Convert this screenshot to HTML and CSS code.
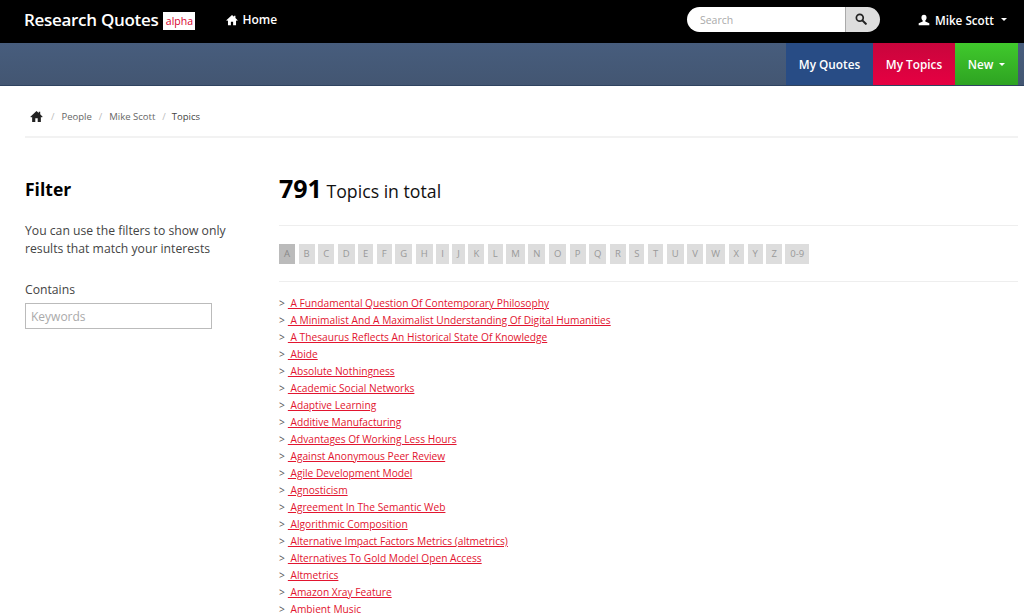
FILE: index.html
```html
<!DOCTYPE html>
<html lang="en">
<head>
    <meta charset="UTF-8">
    <title>Research Quotes - Topics</title>
    <link rel="stylesheet" href="styles.css">
</head>
<body>
    <div class="topbar">
        <a class="brand">Research Quotes</a>
        <span class="alpha">alpha</span>
        <a class="home-link">
            <svg class="icon" viewBox="0 0 14 14" width="12" height="12"><path d="M7 1.2 0.4 7.2l.8.9L2.300 7.200V13h3.400V9h2.600v4h3.400V7.200l1.100.9.800-.9L11 4.600V2H9.400v1.200z"/></svg>
            Home
        </a>
        <div class="search">
            <input class="search-input" type="text" placeholder="Search">
            <button class="search-btn">
                <svg viewBox="0 0 14 14" width="12" height="12"><circle cx="5.6" cy="5.6" r="4" fill="none" stroke="#222" stroke-width="2"/><path d="M8.6 8.6l4 4" stroke="#222" stroke-width="2.4" stroke-linecap="round"/></svg>
            </button>
        </div>
        <a class="user-link">
            <svg class="icon" viewBox="0 0 14 14" width="12" height="12"><path d="M7 .8c-2 0-3 1.500-3 3.400 0 1.500.6 2.800 1.500 3.500v1L.8 10.800V13h12.400v-2.200L8.500 8.700v-1c.9-.7 1.500-2 1.500-3.500C10 2.300 9 .8 7 .8z"/></svg>
            Mike Scott
            <span class="caret"></span>
        </a>
    </div>

    <div class="subbar">
        <a class="sub-btn quotes">My Quotes</a>
        <a class="sub-btn topics">My Topics</a>
        <a class="sub-btn new">New <span class="caret"></span></a>
    </div>

    <div class="breadcrumb">
        <svg class="crumb-home" viewBox="0 0 14 14" width="13" height="13"><path d="M7 1.200 0.400 7.200l.8.900L2.300 7.200V13h3.400V9h2.600v4h3.400V7.200l1.100.9.800-.9L11 4.600V2H9.400v1.200z"/></svg>
        <span class="sep">/</span>
        <a>People</a>
        <span class="sep">/</span>
        <a>Mike Scott</a>
        <span class="sep">/</span>
        <span class="current">Topics</span>
    </div>

    <div class="main">
        <div class="sidebar">
            <h3>Filter</h3>
            <p>You can use the filters to show only results that match your interests</p>
            <label>Contains</label>
            <input class="keywords" type="text" placeholder="Keywords">
        </div>

        <div class="content">
            <h2 class="total"><strong>791</strong> Topics in total</h2>

            <div class="letters">
                <a class="active">A</a><a>B</a><a>C</a><a>D</a><a>E</a><a>F</a><a>G</a><a>H</a><a>I</a><a>J</a><a>K</a><a>L</a><a>M</a><a>N</a><a>O</a><a>P</a><a>Q</a><a>R</a><a>S</a><a>T</a><a>U</a><a>V</a><a>W</a><a>X</a><a>Y</a><a>Z</a><a>0-9</a>
            </div>

            <ul class="topic-list">
                <li><a>&nbsp;A Fundamental Question Of Contemporary Philosophy</a></li>
                <li><a>&nbsp;A Minimalist And A Maximalist Understanding Of Digital Humanities</a></li>
                <li><a>&nbsp;A Thesaurus Reflects An Historical State Of Knowledge</a></li>
                <li><a>&nbsp;Abide</a></li>
                <li><a>&nbsp;Absolute Nothingness</a></li>
                <li><a>&nbsp;Academic Social Networks</a></li>
                <li><a>&nbsp;Adaptive Learning</a></li>
                <li><a>&nbsp;Additive Manufacturing</a></li>
                <li><a>&nbsp;Advantages Of Working Less Hours</a></li>
                <li><a>&nbsp;Against Anonymous Peer Review</a></li>
                <li><a>&nbsp;Agile Development Model</a></li>
                <li><a>&nbsp;Agnosticism</a></li>
                <li><a>&nbsp;Agreement In The Semantic Web</a></li>
                <li><a>&nbsp;Algorithmic Composition</a></li>
                <li><a>&nbsp;Alternative Impact Factors Metrics (altmetrics)</a></li>
                <li><a>&nbsp;Alternatives To Gold Model Open Access</a></li>
                <li><a>&nbsp;Altmetrics</a></li>
                <li><a>&nbsp;Amazon Xray Feature</a></li>
                <li><a>&nbsp;Ambient Music</a></li>
            </ul>
        </div>
    </div>
</body>
</html>
```

FILE: styles.css
```css
* {
    box-sizing: border-box;
}

html, body {
    height: 613px;
    overflow: hidden;
}

body {
    margin: 0;
    background: #fff;
    font-family: "Open Sans", sans-serif;
    color: #444;
}

.topbar {
    height: 43px;
    background: #000;
    color: #fff;
    display: flex;
    align-items: center;
    padding: 0 17px 4px 24px;
}

.brand {
    font-size: 17px;
    font-weight: 600;
    letter-spacing: -0.3px;
}

.alpha {
    background: #fff;
    color: #d8002f;
    font-size: 10.5px;
    line-height: 18px;
    height: 18px;
    width: 32px;
    text-align: center;
    margin: 3px 0 0 5px;
}

.home-link {
    display: flex;
    align-items: center;
    gap: 4px;
    margin-left: 31px;
    font-size: 12px;
    font-weight: 600;
}

.icon {
    fill: #fff;
}

.search {
    display: flex;
    margin-left: auto;
    width: 193px;
    height: 25px;
}

.search-input {
    flex: 1;
    min-width: 0;
    border: 0;
    border-radius: 13px 0 0 13px;
    padding: 0 13px;
    font: 10.5px "Open Sans", sans-serif;
    background: #fff;
}

.search-input::placeholder,
.keywords::placeholder {
    color: #aaa;
    opacity: 1;
}

.search-btn {
    width: 35px;
    border: 0;
    border-left: 1px solid #aaa;
    border-radius: 0 13px 13px 0;
    background: #ddd;
    padding: 2px 4px 0 0;
}

.user-link {
    display: flex;
    align-items: center;
    gap: 5px;
    margin-left: 38px;
    font-size: 11.7px;
    font-weight: 600;
}

.caret {
    display: inline-block;
    width: 0;
    height: 0;
    margin-left: 2px;
    border-left: 3px solid transparent;
    border-right: 3px solid transparent;
    border-top: 3px solid #fff;
    vertical-align: middle;
}

.subbar {
    height: 43px;
    background: linear-gradient(#475d7d, #435672);
    border-bottom: 1px solid #2f4360;
    display: flex;
    justify-content: flex-end;
    padding-right: 6px;
}

.sub-btn {
    display: flex;
    align-items: center;
    justify-content: center;
    gap: 4px;
    color: #fff;
    font-size: 11.8px;
    font-weight: 600;
}

.sub-btn.quotes {
    width: 87px;
    background: #284c85;
}

.sub-btn.topics {
    width: 82px;
    background: linear-gradient(#c8053c, #e60042);
}

.sub-btn.new {
    width: 63px;
    background: linear-gradient(#40c92c, #2ea322);
}

.breadcrumb {
    display: flex;
    align-items: center;
    height: 52px;
    margin: 0 6px 0 25px;
    padding: 11px 0 0 5px;
    border-bottom: 2px solid #f2f2f2;
    font-size: 9.5px;
    color: #666;
}

.crumb-home {
    fill: #222;
    margin-right: 1px;
}

.breadcrumb .sep {
    color: #bbb;
    margin: 0 7px;
}

.breadcrumb .current {
    color: #444;
    margin-left: -1px;
}

.main {
    display: flex;
    padding: 0 6px 0 25px;
}

.sidebar {
    width: 254px;
    flex-shrink: 0;
    font-size: 12.2px;
    color: #444;
}

.sidebar h3 {
    margin: 40px 0 0;
    font-size: 17.5px;
    line-height: 22px;
    font-weight: 700;
    color: #000;
}

.sidebar p {
    width: 215px;
    margin: 22px 0 0;
    line-height: 18px;
}

.sidebar label {
    display: block;
    margin-top: 24px;
    line-height: 16px;
}

.keywords {
    display: block;
    width: 187px;
    height: 26px;
    margin-top: 5px;
    padding: 0 5px;
    border: 1px solid #bbb;
    font: 12px "Open Sans", sans-serif;
}

.content {
    flex: 1;
    min-width: 0;
}

.total {
    margin: 35px 0 0;
    padding-bottom: 19px;
    border-bottom: 1px solid #eee;
    font-size: 17.7px;
    line-height: 30px;
    font-weight: 400;
    color: #111;
}

.total strong {
    font-size: 25px;
    font-weight: 700;
    color: #000;
}

.letters {
    display: flex;
    gap: 3.5px;
    padding: 18px 0 17px;
    border-bottom: 1px solid #eee;
}

.letters a {
    height: 20px;
    padding: 0 5px;
    background: #ddd;
    color: #999;
    font-size: 9.5px;
    line-height: 20px;
}

.letters a.active {
    background: #bbb;
    color: #888;
}

.topic-list {
    list-style: none;
    margin: 13px 0 0;
    padding: 0;
    font-size: 10.2px;
    line-height: 17px;
}

.topic-list li::before {
    content: ">";
    color: #555;
    margin-right: 3px;
}

.topic-list a {
    color: #e2152f;
    text-decoration: underline;
}
```
